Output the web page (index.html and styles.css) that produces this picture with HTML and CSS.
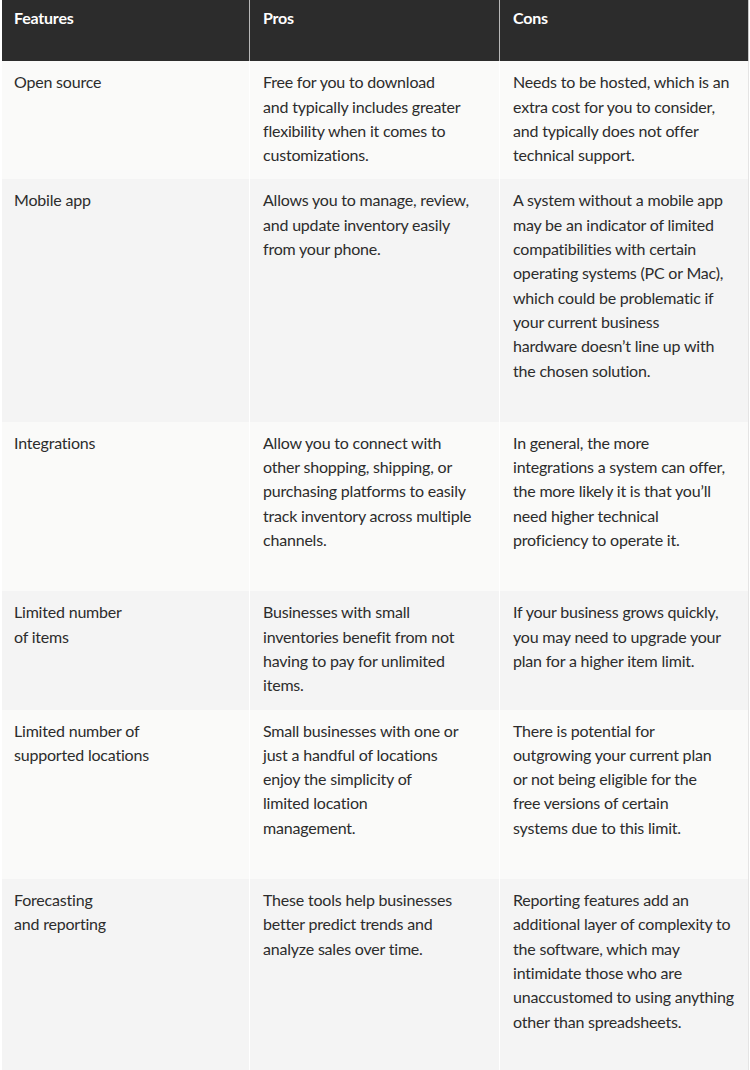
FILE: index.html
```html
<!DOCTYPE html>
<html lang="en">
<head>
<meta charset="utf-8">
<title>Inventory software features</title>
<link rel="stylesheet" href="styles.css">
</head>
<body>
<div class="table">
  <div class="row head">
    <div class="cell">Features</div>
    <div class="cell">Pros</div>
    <div class="cell">Cons</div>
  </div>
  <div class="row odd">
    <div class="cell">Open source</div>
    <div class="cell">Free for you to download<br>and typically includes greater<br>flexibility when it comes to<br>customizations.</div>
    <div class="cell">Needs to be hosted, which is an<br>extra cost for you to consider,<br>and typically does not offer<br>technical support.</div>
  </div>
  <div class="row even tall">
    <div class="cell">Mobile app</div>
    <div class="cell">Allows you to manage, review,<br>and update inventory easily<br>from your phone.</div>
    <div class="cell">A system without a mobile app<br>may be an indicator of limited<br>compatibilities with certain<br>operating systems (PC or Mac),<br>which could be problematic if<br>your current business<br>hardware doesn’t line up with<br>the chosen solution.</div>
  </div>
  <div class="row odd tall">
    <div class="cell">Integrations</div>
    <div class="cell">Allow you to connect with<br>other shopping, shipping, or<br>purchasing platforms to easily<br>track inventory across multiple<br>channels.</div>
    <div class="cell">In general, the more<br>integrations a system can offer,<br>the more likely it is that you’ll<br>need higher technical<br>proficiency to operate it.</div>
  </div>
  <div class="row even">
    <div class="cell">Limited number<br>of items</div>
    <div class="cell">Businesses with small<br>inventories benefit from not<br>having to pay for unlimited<br>items.</div>
    <div class="cell">If your business grows quickly,<br>you may need to upgrade your<br>plan for a higher item limit.</div>
  </div>
  <div class="row odd tall">
    <div class="cell">Limited number of<br>supported locations</div>
    <div class="cell">Small businesses with one or<br>just a handful of locations<br>enjoy the simplicity of<br>limited location<br>management.</div>
    <div class="cell">There is potential for<br>outgrowing your current plan<br>or not being eligible for the<br>free versions of certain<br>systems due to this limit.</div>
  </div>
  <div class="row even tall">
    <div class="cell">Forecasting<br>and reporting</div>
    <div class="cell">These tools help businesses<br>better predict trends and<br>analyze sales over time.</div>
    <div class="cell">Reporting features add an<br>additional layer of complexity to<br>the software, which may<br>intimidate those who are<br>unaccustomed to using anything<br>other than spreadsheets.</div>
  </div>
</div>
</body>
</html>
```

FILE: styles.css
```css
html, body {
  margin: 0;
  padding: 0;
  background: #ffffff;
}

body {
  font-family: "Lato", "Open Sans", sans-serif;
  font-size: 16px;
  line-height: 24.3px;
  letter-spacing: -0.2px;
  color: #2c2c2c;
}

.table {
  display: flex;
  flex-direction: column;
  width: 747px;
  margin-left: 2px;
}

.row {
  display: grid;
  grid-template-columns: 248px 250px 249px;
}

.cell {
  padding: 9px 12px 12px 12px;
  border-right: 1px solid #ffffff;
  white-space: nowrap;
}

.row .cell + .cell {
  padding-left: 13px;
}

.row.tall .cell {
  padding-bottom: 39px;
}

.head {
  background: #2c2c2c;
  color: #ffffff;
  font-weight: 700;
}

.head .cell {
  padding-top: 6px;
  padding-bottom: 31px;
  border-right-color: #b8b8b8;
}

.odd {
  background: #fafaf9;
}

.even {
  background: #f4f4f4;
}

.row .cell:last-child {
  border-right-color: #e4e4e4;
}

.head .cell:last-child {
  border-right-color: #c8c8c8;
}
```
